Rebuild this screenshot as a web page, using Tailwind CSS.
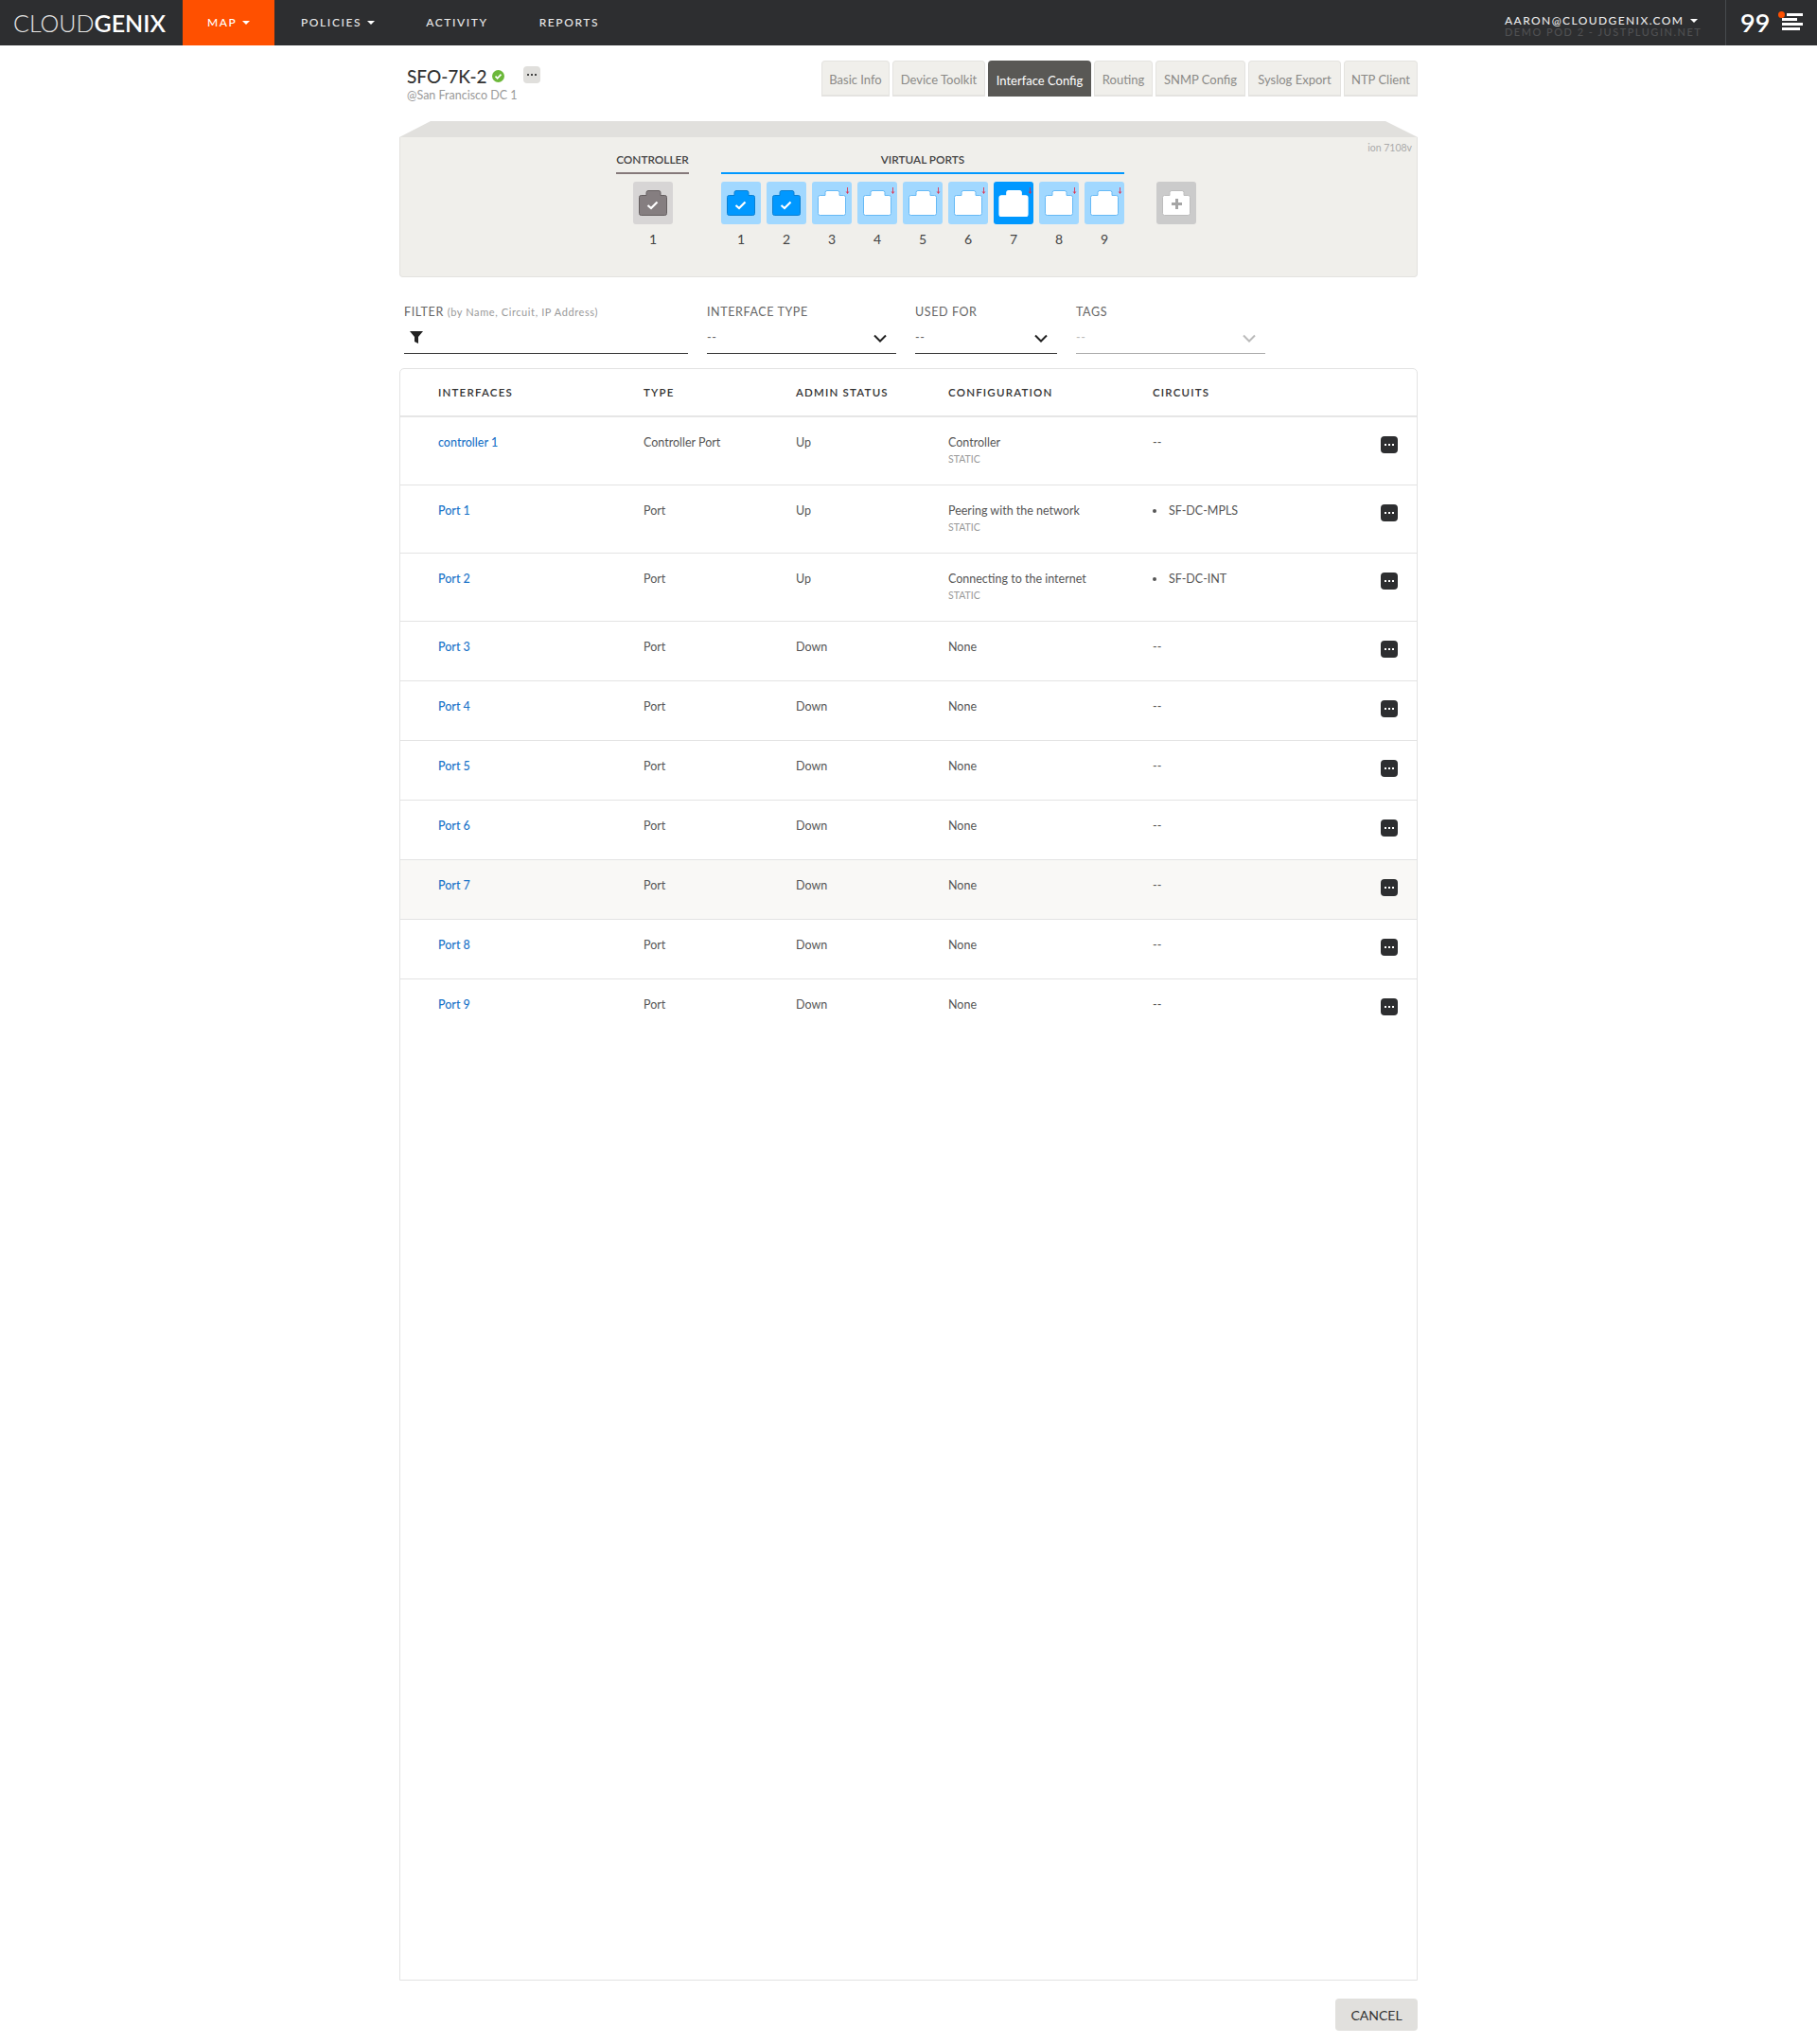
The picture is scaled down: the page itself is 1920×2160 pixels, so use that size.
<!DOCTYPE html>
<html lang="en">
<head>
    <meta charset="UTF-8">
    <title>CloudGenix - Interface Config</title>
    <script src="https://cdn.jsdelivr.net/npm/@tailwindcss/browser@4"></script>
</head>
<body class="bg-white font-['Lato',sans-serif] text-[#555]">
    <!-- Icons used by the port tiles and the caret menus -->
    <svg class="hidden">
        <symbol id="port" viewBox="0 0 30 27"><path d="M2.5 5.5H8V2.5a2 2 0 0 1 2-2H21a2 2 0 0 1 2 2V5.5H27.5a2 2 0 0 1 2 2V24.5a2 2 0 0 1-2 2H2.5a2 2 0 0 1-2-2V7.5a2 2 0 0 1 2-2z"/></symbol>
        <symbol id="chev" viewBox="0 0 14 9"><path d="M1 1.5 7 7.5 13 1.5" fill="none" stroke="currentColor" stroke-width="2"/></symbol>
        <symbol id="arrow" viewBox="0 0 5 7"><path d="M2.5 0V6M1.2 4.4 2.5 6.5 3.8 4.4" fill="none" stroke="#e5243f" stroke-width="0.8"/></symbol>
    </svg>

    <!-- Top nav -->
    <header class="h-12 bg-[#2d2e30] flex items-center text-white text-[12px] font-medium tracking-[1.6px]">
        <div class="w-[193px] pl-[14px] text-[25px] tracking-normal font-light leading-none text-[#e6e6e6]">CLOUD<span class="font-semibold text-white">GENIX</span></div>
        <div class="w-[97px] h-12 bg-[#ff5000] flex items-center pl-[26px] gap-[6px]">MAP <span class="border-x-[4px] border-t-[4px] border-x-transparent border-t-white"></span></div>
        <div class="ml-[28px] flex items-center gap-[6px] text-[#e8e8e8]">POLICIES <span class="border-x-[4px] border-t-[4px] border-x-transparent border-t-white"></span></div>
        <div class="ml-[54px] text-[#e8e8e8]">ACTIVITY</div>
        <div class="ml-[54px] text-[#e8e8e8]">REPORTS</div>
        <div class="ml-auto w-[233px] text-[#e8e8e8] leading-[12px] pt-[7px]">
            <div class="flex items-center gap-[7px] text-[12px] tracking-[1.4px]">AARON@CLOUDGENIX.COM <span class="border-x-[4px] border-t-[4px] border-x-transparent border-t-white"></span></div>
            <div class="text-[#4f5052] text-[11px] tracking-[1.5px]">DEMO POD 2 - JUSTPLUGIN.NET</div>
        </div>
        <div class="w-[97px] h-12 border-l border-[#474a4e] flex items-center pl-[15px] relative">
            <span class="-mt-[2px] text-[27px] font-semibold tracking-normal leading-none text-white">99</span>
            <div class="ml-[13px] -mt-[2px] w-[22px] flex flex-col gap-[2px] items-end">
                <div class="h-[3px] w-[17px] bg-white"></div>
                <div class="h-[3px] w-[16px] bg-white self-start"></div>
                <div class="h-[3px] w-[22px] bg-white"></div>
                <div class="h-[3px] w-[19px] bg-white self-start"></div>
            </div>
            <span class="absolute left-[55px] top-[12px] w-[7px] h-[7px] rounded-full bg-[#ff5000]"></span>
        </div>
    </header>

    <main class="w-[1076px] mx-auto">
        <!-- Device title + tabs -->
        <section class="h-[80px] pt-[16px] flex justify-between">
            <div class="pl-[8px] pt-[4px]">
                <div class="flex items-center h-[24px] text-[#333]">
                    <h1 class="text-[19px] font-medium leading-none">SFO-7K-2</h1>
                    <svg class="ml-[5px] w-[13px] h-[13px]" viewBox="0 0 13 13"><circle cx="6.5" cy="6.5" r="6.5" fill="#6cb83a"/><path d="M3.5 6.7 5.6 8.8 9.5 4.6" fill="none" stroke="#fff" stroke-width="1.7"/></svg>
                    <div class="ml-[20px] -mt-[2px] w-[18px] h-[18px] rounded-[4px] bg-[#e0dfdc] flex items-center justify-center gap-[2px]">
                        <span class="w-[2px] h-[2px] bg-[#444]"></span><span class="w-[2px] h-[2px] bg-[#444]"></span><span class="w-[2px] h-[2px] bg-[#444]"></span>
                    </div>
                </div>
                <p class="text-[12.5px] leading-[14px] mt-[2px] text-[#9a9a9a]">@San Francisco DC 1</p>
            </div>
            <nav class="flex gap-[3px] h-[38px] text-[13px] text-[#8b8a87]">
                <a class="w-[72px] pt-[5px] flex items-center justify-center rounded-t-[4px] bg-[#f0efeb] border border-b-2 border-[#e4e3e0]">Basic Info</a>
                <a class="w-[98px] pt-[5px] flex items-center justify-center rounded-t-[4px] bg-[#f0efeb] border border-b-2 border-[#e4e3e0]">Device Toolkit</a>
                <a class="w-[109px] pt-[5px] flex items-center justify-center rounded-t-[4px] bg-[#595855] text-white">Interface Config</a>
                <a class="w-[62px] pt-[5px] flex items-center justify-center rounded-t-[4px] bg-[#f0efeb] border border-b-2 border-[#e4e3e0]">Routing</a>
                <a class="w-[95px] pt-[5px] flex items-center justify-center rounded-t-[4px] bg-[#f0efeb] border border-b-2 border-[#e4e3e0]">SNMP Config</a>
                <a class="w-[98px] pt-[5px] flex items-center justify-center rounded-t-[4px] bg-[#f0efeb] border border-b-2 border-[#e4e3e0]">Syslog Export</a>
                <a class="w-[78px] pt-[5px] flex items-center justify-center rounded-t-[4px] bg-[#f0efeb] border border-b-2 border-[#e4e3e0]">NTP Client</a>
            </nav>
        </section>

        <!-- Chassis -->
        <section>
            <div class="h-[17px] bg-[#e1e0dd] [clip-path:polygon(33px_0,calc(100%-34px)_0,100%_100%,0_100%)]"></div>
            <div class="relative h-[148px] bg-[#f0efeb] border border-t-0 border-[#e3e2df] rounded-b-[4px] pl-[228px] flex text-[#444]">
                <span class="absolute right-[5px] top-[4px] text-[10.5px] text-[#aaa]">ion 7108v</span>
                <div class="w-[77px]">
                    <div class="h-[39px] pt-[16px] border-b-2 border-[#85797a] text-[11.8px] font-semibold leading-[16px] text-center text-[#444]">CONTROLLER</div>
                    <div class="mt-[8px] ml-[18px] w-[42px]">
                        <div class="h-[45px] rounded-[3px] bg-[#d7d5d5] pt-[9px] pl-[6px] relative text-white">
                            <svg class="w-[30px] h-[27px] fill-[#857e80] stroke-[#655f60]"><use href="#port"/></svg>
                            <svg class="absolute left-[14px] top-[20px] w-[13px] h-[10px]" viewBox="0 0 13 10"><path d="M1.5 5 5 8 11.5 1.5" fill="none" stroke="#fff" stroke-width="2.2"/></svg>
                        </div>
                        <div class="text-center text-[14px] leading-[20px] mt-[6px]">1</div>
                    </div>
                </div>
                <div class="ml-[34px] w-[426px]">
                    <div class="h-[39px] pt-[16px] border-b-2 border-[#0098ff] text-[11.8px] font-semibold leading-[16px] text-center text-[#444]">VIRTUAL PORTS</div>
                    <div class="mt-[8px] flex gap-[6px] text-center text-[14px] leading-[20px]">
                        <div class="w-[42px]">
                            <div class="h-[45px] rounded-[3px] bg-[#a1d8ff] pt-[9px] pl-[6px] relative">
                                <svg class="w-[30px] h-[27px] fill-[#0098ff] stroke-[#0a7fd1]"><use href="#port"/></svg>
                                <svg class="absolute left-[14px] top-[20px] w-[13px] h-[10px]" viewBox="0 0 13 10"><path d="M1.5 5 5 8 11.5 1.5" fill="none" stroke="#fff" stroke-width="2.2"/></svg>
                            </div>
                            <div class="mt-[6px]">1</div>
                        </div>
                        <div class="w-[42px]">
                            <div class="h-[45px] rounded-[3px] bg-[#a1d8ff] pt-[9px] pl-[6px] relative">
                                <svg class="w-[30px] h-[27px] fill-[#0098ff] stroke-[#0a7fd1]"><use href="#port"/></svg>
                                <svg class="absolute left-[14px] top-[20px] w-[13px] h-[10px]" viewBox="0 0 13 10"><path d="M1.5 5 5 8 11.5 1.5" fill="none" stroke="#fff" stroke-width="2.2"/></svg>
                            </div>
                            <div class="mt-[6px]">2</div>
                        </div>
                        <div class="w-[42px]">
                            <div class="h-[45px] rounded-[3px] bg-[#a1d8ff] pt-[9px] pl-[6px] relative">
                                <svg class="w-[30px] h-[27px] fill-white stroke-[#66b9f5]"><use href="#port"/></svg>
                                <svg class="absolute left-[35px] top-[6px] w-[5px] h-[7px]"><use href="#arrow"/></svg>
                            </div>
                            <div class="mt-[6px]">3</div>
                        </div>
                        <div class="w-[42px]">
                            <div class="h-[45px] rounded-[3px] bg-[#a1d8ff] pt-[9px] pl-[6px] relative">
                                <svg class="w-[30px] h-[27px] fill-white stroke-[#66b9f5]"><use href="#port"/></svg>
                                <svg class="absolute left-[35px] top-[6px] w-[5px] h-[7px]"><use href="#arrow"/></svg>
                            </div>
                            <div class="mt-[6px]">4</div>
                        </div>
                        <div class="w-[42px]">
                            <div class="h-[45px] rounded-[3px] bg-[#a1d8ff] pt-[9px] pl-[6px] relative">
                                <svg class="w-[30px] h-[27px] fill-white stroke-[#66b9f5]"><use href="#port"/></svg>
                                <svg class="absolute left-[35px] top-[6px] w-[5px] h-[7px]"><use href="#arrow"/></svg>
                            </div>
                            <div class="mt-[6px]">5</div>
                        </div>
                        <div class="w-[42px]">
                            <div class="h-[45px] rounded-[3px] bg-[#a1d8ff] pt-[9px] pl-[6px] relative">
                                <svg class="w-[30px] h-[27px] fill-white stroke-[#66b9f5]"><use href="#port"/></svg>
                                <svg class="absolute left-[35px] top-[6px] w-[5px] h-[7px]"><use href="#arrow"/></svg>
                            </div>
                            <div class="mt-[6px]">6</div>
                        </div>
                        <div class="w-[42px]">
                            <div class="h-[45px] rounded-[3px] bg-[#0098ff] pt-[9px] pl-[5px] relative">
                                <svg class="w-[32px] h-[28px] fill-white stroke-white"><use href="#port"/></svg>
                                <svg class="absolute left-[36px] top-[6px] w-[5px] h-[7px]"><use href="#arrow"/></svg>
                            </div>
                            <div class="mt-[6px]">7</div>
                        </div>
                        <div class="w-[42px]">
                            <div class="h-[45px] rounded-[3px] bg-[#a1d8ff] pt-[9px] pl-[6px] relative">
                                <svg class="w-[30px] h-[27px] fill-white stroke-[#66b9f5]"><use href="#port"/></svg>
                                <svg class="absolute left-[35px] top-[6px] w-[5px] h-[7px]"><use href="#arrow"/></svg>
                            </div>
                            <div class="mt-[6px]">8</div>
                        </div>
                        <div class="w-[42px]">
                            <div class="h-[45px] rounded-[3px] bg-[#a1d8ff] pt-[9px] pl-[6px] relative">
                                <svg class="w-[30px] h-[27px] fill-white stroke-[#66b9f5]"><use href="#port"/></svg>
                                <svg class="absolute left-[35px] top-[6px] w-[5px] h-[7px]"><use href="#arrow"/></svg>
                            </div>
                            <div class="mt-[6px]">9</div>
                        </div>
                    </div>
                </div>
                <div class="ml-[34px] mt-[47px] w-[42px] h-[45px] rounded-[3px] bg-[#cbcbcb] pt-[9px] pl-[6px] relative">
                    <svg class="w-[30px] h-[27px] fill-white stroke-[#bdbdbd]"><use href="#port"/></svg>
                    <svg class="absolute left-[15px] top-[17px] w-[13px] h-[13px]" viewBox="0 0 13 13"><path d="M6.5 1V12M1 6.5H12" fill="none" stroke="#a5a5a5" stroke-width="3"/></svg>
                </div>
            </div>
        </section>

        <!-- Filters -->
        <section class="h-[96px] pl-[5px] pt-[28px] flex text-[12.5px] tracking-[0.6px] text-[#666]">
            <div class="w-[300px]">
                <div class="h-[18px] leading-[18px]">FILTER <span class="text-[11px] text-[#999]">(by Name, Circuit, IP Address)</span></div>
                <div class="mt-[8px] h-[27px] border-b border-[#333] pl-[6px] pt-[3px]">
                    <svg class="w-[14px] h-[13px]" viewBox="0 0 14 13"><path d="M0 0H14L9 6V13L5 11V6z" fill="#222"/></svg>
                </div>
            </div>
            <div class="ml-[20px] w-[200px]">
                <div class="h-[18px] leading-[18px]">INTERFACE TYPE</div>
                <div class="mt-[8px] h-[27px] pb-[6px] border-b border-[#333] flex items-center justify-between pr-[10px]"><span>--</span><svg class="w-[14px] h-[9px] text-[#222]"><use href="#chev"/></svg></div>
            </div>
            <div class="ml-[20px] w-[150px]">
                <div class="h-[18px] leading-[18px]">USED FOR</div>
                <div class="mt-[8px] h-[27px] pb-[6px] border-b border-[#333] flex items-center justify-between pr-[10px]"><span>--</span><svg class="w-[14px] h-[9px] text-[#222]"><use href="#chev"/></svg></div>
            </div>
            <div class="ml-[20px] w-[200px]">
                <div class="h-[18px] leading-[18px]">TAGS</div>
                <div class="mt-[8px] h-[27px] pb-[6px] border-b border-[#aaa] flex items-center justify-between pr-[10px] text-[#bbb]"><span>--</span><svg class="w-[14px] h-[9px] text-[#bbb]"><use href="#chev"/></svg></div>
            </div>
        </section>

        <!-- Interfaces table -->
        <section class="h-[1704px] border border-[#e3e3e3] rounded-t-[5px] text-[12.5px] leading-[18px]">
            <div class="h-[51px] border-b-2 border-[#e6e6e6] pl-[40px] grid grid-cols-[217px_161px_161px_216px_1fr] items-center text-[11.5px] font-semibold tracking-[1.2px] text-[#333]">
                <div>INTERFACES</div><div>TYPE</div><div>ADMIN STATUS</div><div>CONFIGURATION</div><div>CIRCUITS</div>
            </div>
            <div class="h-[72px] border-b border-[#e3e3e3] pl-[40px] pr-[20px] pt-[18px] grid grid-cols-[217px_161px_161px_216px_1fr_18px]">
                <a class="text-[#1a73c8] font-medium">controller 1</a><div>Controller Port</div><div>Up</div>
                <div>Controller<div class="text-[10.5px] text-[#999] leading-[16px]">STATIC</div></div>
                <div>--</div>
                <div class="mt-[2px] w-[18px] h-[18px] rounded-[4px] bg-[#2d2e30] flex items-center justify-center gap-[2px]"><span class="w-[2px] h-[2px] bg-white"></span><span class="w-[2px] h-[2px] bg-white"></span><span class="w-[2px] h-[2px] bg-white"></span></div>
            </div>
            <div class="h-[72px] border-b border-[#e3e3e3] pl-[40px] pr-[20px] pt-[18px] grid grid-cols-[217px_161px_161px_216px_1fr_18px]">
                <a class="text-[#1a73c8] font-medium">Port 1</a><div>Port</div><div>Up</div>
                <div>Peering with the network<div class="text-[10.5px] text-[#999] leading-[16px]">STATIC</div></div>
                <div class="flex items-center h-[18px] gap-[13px]"><span class="w-[4px] h-[4px] rounded-full bg-[#555]"></span>SF-DC-MPLS</div>
                <div class="mt-[2px] w-[18px] h-[18px] rounded-[4px] bg-[#2d2e30] flex items-center justify-center gap-[2px]"><span class="w-[2px] h-[2px] bg-white"></span><span class="w-[2px] h-[2px] bg-white"></span><span class="w-[2px] h-[2px] bg-white"></span></div>
            </div>
            <div class="h-[72px] border-b border-[#e3e3e3] pl-[40px] pr-[20px] pt-[18px] grid grid-cols-[217px_161px_161px_216px_1fr_18px]">
                <a class="text-[#1a73c8] font-medium">Port 2</a><div>Port</div><div>Up</div>
                <div>Connecting to the internet<div class="text-[10.5px] text-[#999] leading-[16px]">STATIC</div></div>
                <div class="flex items-center h-[18px] gap-[13px]"><span class="w-[4px] h-[4px] rounded-full bg-[#555]"></span>SF-DC-INT</div>
                <div class="mt-[2px] w-[18px] h-[18px] rounded-[4px] bg-[#2d2e30] flex items-center justify-center gap-[2px]"><span class="w-[2px] h-[2px] bg-white"></span><span class="w-[2px] h-[2px] bg-white"></span><span class="w-[2px] h-[2px] bg-white"></span></div>
            </div>
            <div class="h-[63px] border-b border-[#e3e3e3] pl-[40px] pr-[20px] pt-[18px] grid grid-cols-[217px_161px_161px_216px_1fr_18px]">
                <a class="text-[#1a73c8] font-medium">Port 3</a><div>Port</div><div>Down</div><div>None</div><div>--</div>
                <div class="mt-[2px] w-[18px] h-[18px] rounded-[4px] bg-[#2d2e30] flex items-center justify-center gap-[2px]"><span class="w-[2px] h-[2px] bg-white"></span><span class="w-[2px] h-[2px] bg-white"></span><span class="w-[2px] h-[2px] bg-white"></span></div>
            </div>
            <div class="h-[63px] border-b border-[#e3e3e3] pl-[40px] pr-[20px] pt-[18px] grid grid-cols-[217px_161px_161px_216px_1fr_18px]">
                <a class="text-[#1a73c8] font-medium">Port 4</a><div>Port</div><div>Down</div><div>None</div><div>--</div>
                <div class="mt-[2px] w-[18px] h-[18px] rounded-[4px] bg-[#2d2e30] flex items-center justify-center gap-[2px]"><span class="w-[2px] h-[2px] bg-white"></span><span class="w-[2px] h-[2px] bg-white"></span><span class="w-[2px] h-[2px] bg-white"></span></div>
            </div>
            <div class="h-[63px] border-b border-[#e3e3e3] pl-[40px] pr-[20px] pt-[18px] grid grid-cols-[217px_161px_161px_216px_1fr_18px]">
                <a class="text-[#1a73c8] font-medium">Port 5</a><div>Port</div><div>Down</div><div>None</div><div>--</div>
                <div class="mt-[2px] w-[18px] h-[18px] rounded-[4px] bg-[#2d2e30] flex items-center justify-center gap-[2px]"><span class="w-[2px] h-[2px] bg-white"></span><span class="w-[2px] h-[2px] bg-white"></span><span class="w-[2px] h-[2px] bg-white"></span></div>
            </div>
            <div class="h-[63px] border-b border-[#e3e3e3] pl-[40px] pr-[20px] pt-[18px] grid grid-cols-[217px_161px_161px_216px_1fr_18px]">
                <a class="text-[#1a73c8] font-medium">Port 6</a><div>Port</div><div>Down</div><div>None</div><div>--</div>
                <div class="mt-[2px] w-[18px] h-[18px] rounded-[4px] bg-[#2d2e30] flex items-center justify-center gap-[2px]"><span class="w-[2px] h-[2px] bg-white"></span><span class="w-[2px] h-[2px] bg-white"></span><span class="w-[2px] h-[2px] bg-white"></span></div>
            </div>
            <div class="h-[63px] border-b border-[#e3e3e3] bg-[#f9f8f6] pl-[40px] pr-[20px] pt-[18px] grid grid-cols-[217px_161px_161px_216px_1fr_18px]">
                <a class="text-[#1a73c8] font-medium">Port 7</a><div>Port</div><div>Down</div><div>None</div><div>--</div>
                <div class="mt-[2px] w-[18px] h-[18px] rounded-[4px] bg-[#2d2e30] flex items-center justify-center gap-[2px]"><span class="w-[2px] h-[2px] bg-white"></span><span class="w-[2px] h-[2px] bg-white"></span><span class="w-[2px] h-[2px] bg-white"></span></div>
            </div>
            <div class="h-[63px] border-b border-[#e3e3e3] pl-[40px] pr-[20px] pt-[18px] grid grid-cols-[217px_161px_161px_216px_1fr_18px]">
                <a class="text-[#1a73c8] font-medium">Port 8</a><div>Port</div><div>Down</div><div>None</div><div>--</div>
                <div class="mt-[2px] w-[18px] h-[18px] rounded-[4px] bg-[#2d2e30] flex items-center justify-center gap-[2px]"><span class="w-[2px] h-[2px] bg-white"></span><span class="w-[2px] h-[2px] bg-white"></span><span class="w-[2px] h-[2px] bg-white"></span></div>
            </div>
            <div class="h-[63px] pl-[40px] pr-[20px] pt-[18px] grid grid-cols-[217px_161px_161px_216px_1fr_18px]">
                <a class="text-[#1a73c8] font-medium">Port 9</a><div>Port</div><div>Down</div><div>None</div><div>--</div>
                <div class="mt-[2px] w-[18px] h-[18px] rounded-[4px] bg-[#2d2e30] flex items-center justify-center gap-[2px]"><span class="w-[2px] h-[2px] bg-white"></span><span class="w-[2px] h-[2px] bg-white"></span><span class="w-[2px] h-[2px] bg-white"></span></div>
            </div>
        </section>

        <div class="flex justify-end mt-[19px] mb-[14px]">
            <button class="w-[87px] h-[34px] rounded-[4px] bg-[#e1e0dd] text-[14px] text-[#333]">CANCEL</button>
        </div>
    </main>
</body>
</html>
